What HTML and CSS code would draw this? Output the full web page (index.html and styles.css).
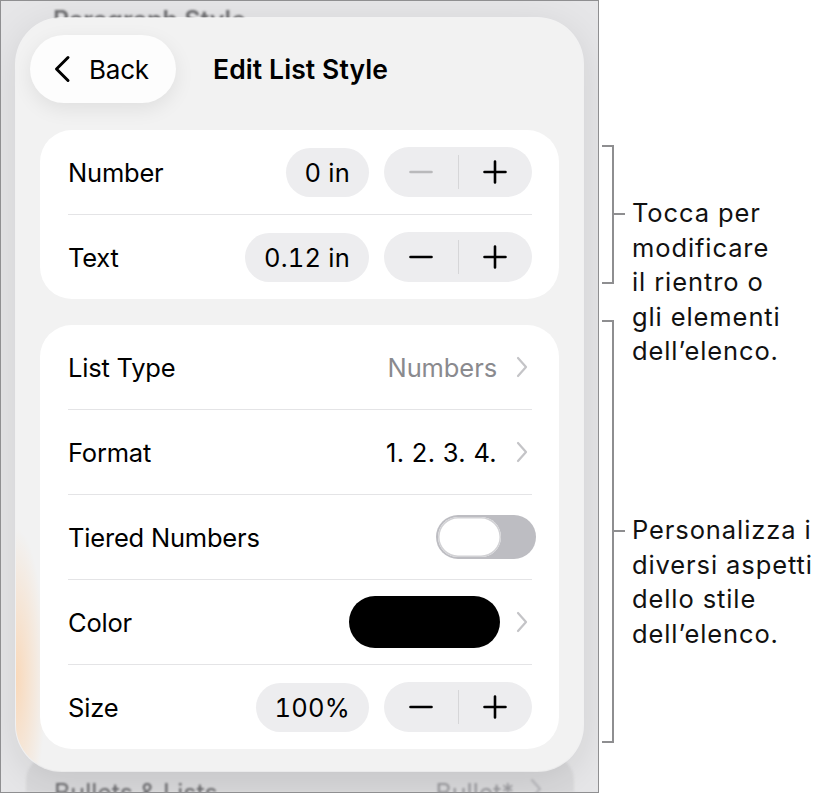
FILE: index.html
```html
<!DOCTYPE html>
<html lang="it">
<head>
<meta charset="utf-8">
<title>Edit List Style</title>
<link rel="stylesheet" href="styles.css">
</head>
<body>
<div class="page">
  <div class="device">
    <div class="bg-title">Paragraph Style</div>
    <div class="bg-row">
      <span>Bullets &amp; Lists</span>
      <span class="bg-value">Bullet*
        <svg class="chev" width="12" height="22" viewBox="0 0 12 22"><path d="M2 2l8 9-8 9" fill="none" stroke="#b8b8bc" stroke-width="2.2" stroke-linecap="round" stroke-linejoin="round"/></svg>
      </span>
    </div>

    <div class="popover">
      <div class="header">
        <div class="back">
          <svg width="20" height="28" viewBox="0 0 20 28"><path d="M16 2.5L4.5 14 16 25.5" fill="none" stroke="#000" stroke-width="3" stroke-linecap="round" stroke-linejoin="round"/></svg>
          <span>Back</span>
        </div>
        <div class="title">Edit List Style</div>
      </div>

      <div class="card">
        <div class="row">
          <span class="label">Number</span>
          <div class="controls">
            <span class="pill">0 in</span>
            <div class="stepper">
              <span class="step"><svg width="24" height="24" viewBox="0 0 24 24"><path d="M1.5 12h21" stroke="#b9b9bb" stroke-width="2.6" stroke-linecap="round"/></svg></span>
              <span class="sep"></span>
              <span class="step"><svg width="24" height="24" viewBox="0 0 24 24"><path d="M1.5 12h21M12 1.5v21" stroke="#000" stroke-width="2.6" stroke-linecap="round"/></svg></span>
            </div>
          </div>
        </div>
        <div class="row">
          <span class="label">Text</span>
          <div class="controls">
            <span class="pill">0.12 in</span>
            <div class="stepper">
              <span class="step"><svg width="24" height="24" viewBox="0 0 24 24"><path d="M1.5 12h21" stroke="#000" stroke-width="2.6" stroke-linecap="round"/></svg></span>
              <span class="sep"></span>
              <span class="step"><svg width="24" height="24" viewBox="0 0 24 24"><path d="M1.5 12h21M12 1.5v21" stroke="#000" stroke-width="2.6" stroke-linecap="round"/></svg></span>
            </div>
          </div>
        </div>
      </div>

      <div class="card">
        <div class="row">
          <span class="label">List Type</span>
          <div class="controls">
            <span class="value muted">Numbers</span>
            <svg class="chev" width="12" height="22" viewBox="0 0 12 22"><path d="M2 2l8 9-8 9" fill="none" stroke="#c4c4c7" stroke-width="2.2" stroke-linecap="round" stroke-linejoin="round"/></svg>
          </div>
        </div>
        <div class="row">
          <span class="label">Format</span>
          <div class="controls">
            <span class="value format">1. 2. 3. 4.</span>
            <svg class="chev" width="12" height="22" viewBox="0 0 12 22"><path d="M2 2l8 9-8 9" fill="none" stroke="#c4c4c7" stroke-width="2.2" stroke-linecap="round" stroke-linejoin="round"/></svg>
          </div>
        </div>
        <div class="row">
          <span class="label">Tiered Numbers</span>
          <div class="controls">
            <span class="toggle"><span class="knob"></span></span>
          </div>
        </div>
        <div class="row">
          <span class="label">Color</span>
          <div class="controls">
            <span class="swatch"></span>
            <svg class="chev" width="12" height="22" viewBox="0 0 12 22"><path d="M2 2l8 9-8 9" fill="none" stroke="#c4c4c7" stroke-width="2.2" stroke-linecap="round" stroke-linejoin="round"/></svg>
          </div>
        </div>
        <div class="row">
          <span class="label">Size</span>
          <div class="controls">
            <span class="pill">100%</span>
            <div class="stepper">
              <span class="step"><svg width="24" height="24" viewBox="0 0 24 24"><path d="M1.5 12h21" stroke="#000" stroke-width="2.6" stroke-linecap="round"/></svg></span>
              <span class="sep"></span>
              <span class="step"><svg width="24" height="24" viewBox="0 0 24 24"><path d="M1.5 12h21M12 1.5v21" stroke="#000" stroke-width="2.6" stroke-linecap="round"/></svg></span>
            </div>
          </div>
        </div>
      </div>
    </div>
  </div>

  <div class="notes">
    <div class="callout callout-1">
      <span class="bracket"></span>
      <div class="note">
        <span class="tick"></span>
        <p class="note-text">Tocca per<br>modificare<br>il rientro o<br>gli elementi<br>dell’elenco.</p>
      </div>
    </div>
    <div class="callout callout-2">
      <span class="bracket"></span>
      <div class="note">
        <span class="tick"></span>
        <p class="note-text">Personalizza i<br>diversi aspetti<br>dello stile<br>dell’elenco.</p>
      </div>
    </div>
  </div>
</div>
</body>
</html>
```

FILE: styles.css
```css
* { box-sizing: border-box; }
html, body { margin: 0; padding: 0; background: #fff; }
body { font-family: Inter, "Noto Sans", sans-serif; color: #000; }

.page { display: flex; width: 830px; height: 793px; }

.device {
  position: relative;
  width: 599px;
  height: 793px;
  border: 1px solid #8f8f91;
  background: #e6e6e8;
  overflow: hidden;
  display: flex;
  flex-direction: column;
  justify-content: space-between;
}

.bg-title {
  margin: 4px 0 0 52px;
  font-size: 25px;
  font-weight: 600;
  color: #6f6f72;
  filter: blur(0.8px);
}

.bg-row {
  margin: 0 24px 0 25px;
  height: 36px;
  padding: 22px 28px 0 28px;
  border-radius: 24px 24px 0 0;
  background: #d9d9db;
  display: flex;
  justify-content: space-between;
  font-size: 25px;
  line-height: 30px;
  color: #6b6b6e;
  filter: blur(0.8px);
}
.bg-value { color: #9a9a9e; display: flex; gap: 16px; }

.popover {
  position: absolute;
  left: 15px;
  top: 17px;
  width: 567px;
  height: 753px;
  border-radius: 46px;
  background:
    radial-gradient(ellipse 30px 150px at 0 660px, rgba(255, 196, 140, 0.55), rgba(255, 196, 140, 0) 100%),
    #f2f2f2;
  box-shadow: 0 0 0 1px rgba(255,255,255,0.6), 0 8px 40px rgba(0, 0, 0, 0.10);
  padding: 17px 24px 0 24px;
}

.header {
  display: flex;
  align-items: center;
  height: 68px;
  margin-left: -10px;
  margin-bottom: 27px;
}

.back {
  width: 146px;
  height: 68px;
  border-radius: 34px;
  background: #fdfdfd;
  box-shadow: 0 6px 20px rgba(0,0,0,0.08);
  display: flex;
  align-items: center;
  padding-left: 22px;
  font-size: 26px;
  letter-spacing: -0.2px;
}
.back svg { margin-right: 17px; }

.title {
  margin-left: 37px;
  font-size: 26.5px;
  font-weight: 600;
  letter-spacing: 0.1px;
}

.card {
  background: #fff;
  border-radius: 32px;
  margin-bottom: 26px;
}

.row {
  height: 84px;
  margin: 0 27px 0 28px;
  display: flex;
  align-items: center;
  justify-content: space-between;
}
.row + .row { border-top: 1px solid #e4e4e6; height: 85px; }

.label {
  font-size: 25.5px;
  letter-spacing: -0.2px;
}

.controls {
  display: flex;
  align-items: center;
}

.pill {
  height: 49px;
  border-radius: 25px;
  background: #ededef;
  padding: 0 19px;
  display: flex;
  align-items: center;
  font-size: 25.5px;
  letter-spacing: 0.2px;
  font-variant-numeric: tabular-nums;
  margin-right: 15px;
}

.stepper {
  width: 148px;
  height: 50px;
  border-radius: 25px;
  background: #ededef;
  display: flex;
  align-items: center;
}
.step {
  flex: 1;
  display: flex;
  justify-content: center;
  align-items: center;
}
.sep {
  width: 1px;
  height: 34px;
  background: #d6d6d8;
}

.value {
  font-size: 25.5px;
  letter-spacing: -0.1px;
  margin-right: 19px;
}
.value.muted { color: #8a8a8e; }
.value.format { letter-spacing: 0.3px; }

.chev { display: block; margin-right: 4px; }

.toggle {
  width: 100px;
  height: 44px;
  border-radius: 22px;
  background: #bdbdc2;
  padding: 2px;
  margin-right: -4px;
  display: flex;
}
.knob {
  width: 63px;
  height: 40px;
  border-radius: 20px;
  background: #fff;
  box-shadow: inset 0 0 0 1.5px #d2d2d5;
}

.swatch {
  width: 151px;
  height: 52px;
  border-radius: 26px;
  background: #000;
  margin-right: 16px;
}

.notes {
  flex: 1;
  display: flex;
  flex-direction: column;
  font-family: Inter, "Liberation Sans", sans-serif;
}

.callout {
  display: flex;
  align-items: flex-start;
  margin-left: 3px;
}
.callout-1 { height: 139px; margin-top: 145px; }
.callout-2 { height: 423px; margin-top: 36px; }

.bracket {
  width: 12px;
  height: 100%;
  border: 2px solid #8e8e90;
  border-left: none;
  flex: none;
}

.note {
  display: flex;
  align-items: flex-start;
}
.callout-1 .note { margin-top: 51px; }
.callout-2 .note { margin-top: 193px; }

.tick {
  width: 11px;
  height: 2px;
  background: #8e8e90;
  margin-top: 17px;
  flex: none;
}

.note-text {
  margin: 0 0 0 7px;
  font-size: 25.5px;
  line-height: 34.5px;
  letter-spacing: 0.9px;
  color: #111;
  white-space: nowrap;
}
```
